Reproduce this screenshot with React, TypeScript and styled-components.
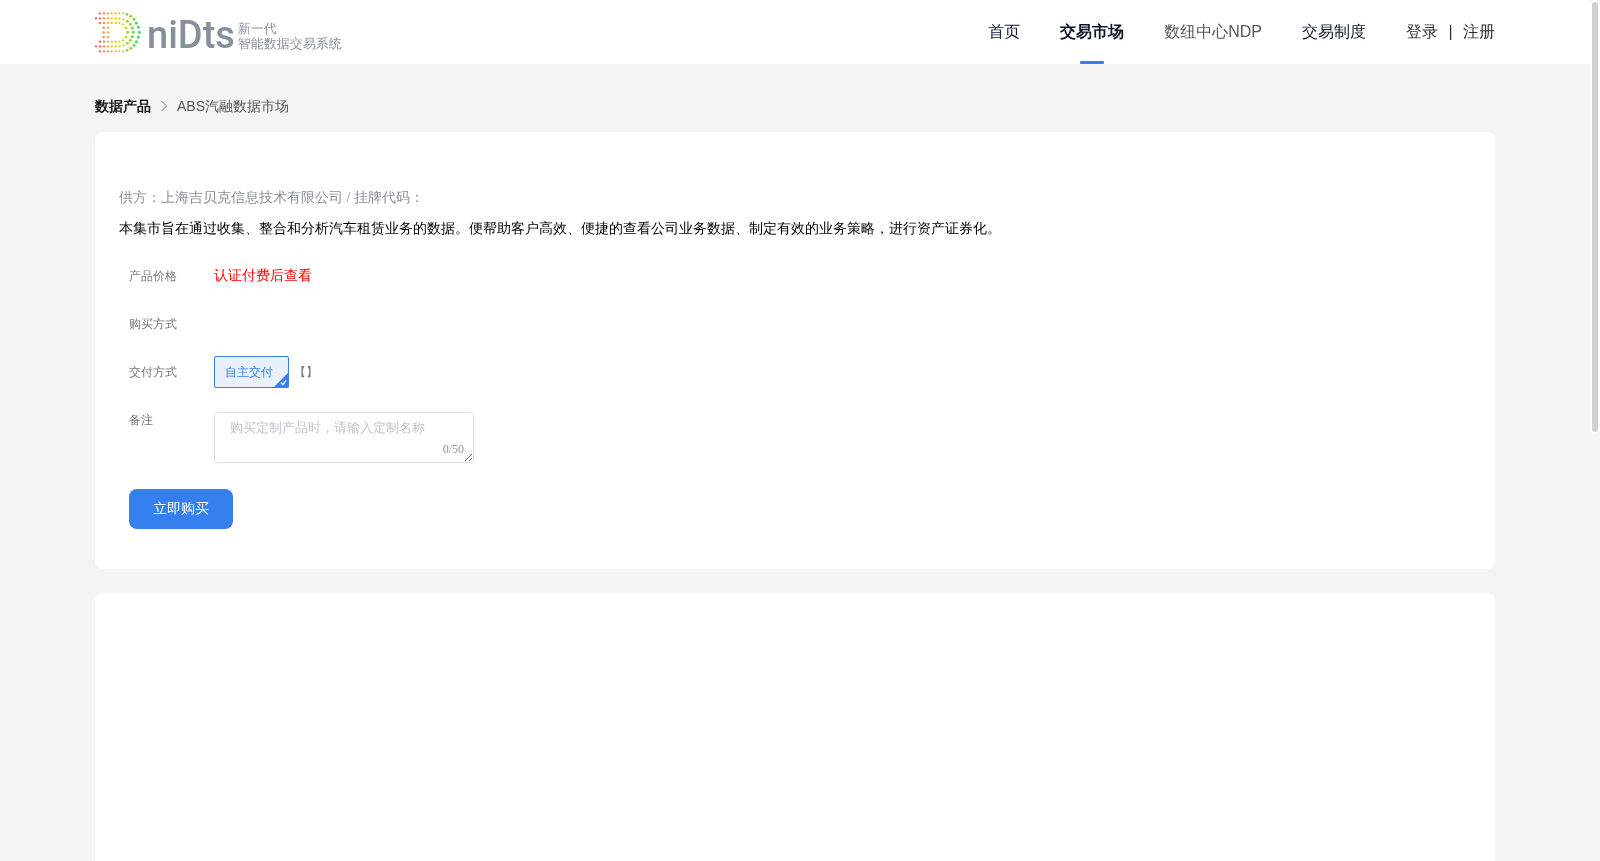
import React, { useState } from "react";
import styled, { createGlobalStyle } from "styled-components";

const sans = `"Liberation Sans", "WenQuanYi Zen Hei", "Noto Sans CJK SC", sans-serif`;
const boldSans = `"Liberation Sans", sans-serif`;
const serif = `"Liberation Serif", "WenQuanYi Zen Hei", "Noto Sans CJK SC", serif`;

const GlobalStyle = createGlobalStyle`
  * { box-sizing: border-box; }
  body { margin: 0; background: #f4f4f4; font-family: ${serif}; }
  p { margin: 0; }
`;

const Page = styled.div`
  display: flex;
  height: 100vh;
  background: #f4f4f4;
`;

const Scroller = styled.div`
  flex: 1;
  min-width: 0;
  overflow-y: auto;
  scrollbar-width: none;
  will-change: transform;
`;

const ScrollTrack = styled.div`
  flex: none;
  width: 10px;
  background: #f4f4f4;
`;

const ScrollThumb = styled.div`
  height: 50.4%;
  border: 2px solid #fff;
  border-radius: 5px;
  background: #d1d1d1;
`;

const Container = styled.div`
  width: 90%;
  max-width: 1400px;
  margin: 0 auto;
`;

const Header = styled.header`
  background: #fff;
  font-family: ${sans};
`;

const HeaderInner = styled(Container)`
  display: flex;
  align-items: center;
  justify-content: space-between;
  height: 64px;
`;

const Logo = styled.a`
  display: flex;
  align-items: center;
  color: #86909c;
  text-decoration: none;
`;

const Wordmark = styled.span`
  padding-top: 6px;
  margin: 0 3px 0 6px;
  font-family: Roboto, sans-serif;
  font-size: 38px;
  line-height: 58px;
  font-weight: 500;
`;

const Tagline = styled.span`
  padding-top: 8px;
  font-size: 13px;
  line-height: 15px;
  white-space: nowrap;
`;

const Nav = styled.nav`
  display: flex;
  gap: 40px;
  font-size: 16px;
`;

const NavLink = styled.a<{ $active?: boolean; $muted?: boolean }>`
  position: relative;
  line-height: 64px;
  color: ${(p) => (p.$muted ? "#555" : "#0b1528")};
  font-family: ${(p) => (p.$active ? boldSans : sans)};
  font-weight: ${(p) => (p.$active ? 700 : 400)};
  text-decoration: none;
  white-space: nowrap;
  &::after {
    content: "";
    display: ${(p) => (p.$active ? "block" : "none")};
    position: absolute;
    bottom: 0;
    left: 50%;
    width: 24px;
    height: 3px;
    border-radius: 1px;
    background: #367fee;
    transform: translateX(-50%);
  }
`;

const Account = styled.div`
  display: flex;
  gap: 10px;
  color: #303133;
  line-height: 64px;
`;

const AccountLink = styled.a`
  color: #303133;
  text-decoration: none;
`;

const Divider = styled.span`
  width: 5px;
  text-align: center;
`;

const Breadcrumb = styled.nav`
  display: flex;
  align-items: center;
  gap: 8px;
  padding: 32px 0 16px;
  font-family: ${sans};
  font-size: 14px;
  line-height: 20px;
  color: #555;
`;

const CrumbLink = styled.a`
  color: #1a1a1a;
  font-family: ${boldSans};
  font-weight: 700;
  text-decoration: none;
`;

const Card = styled.section`
  margin-bottom: 24px;
  padding: 56px 24px 40px;
  border-radius: 8px;
  background: #fff;
`;

const DetailCard = styled(Card)`
  min-height: 1092px;
`;

const Supplier = styled.p`
  color: #86909c;
  font-size: 14px;
  line-height: 20px;
`;

const Description = styled.p`
  margin-top: 8px;
  font-size: 14px;
  line-height: 26px;
  color: #000;
`;

const Form = styled.form`
  margin-top: 18px;
  padding: 0 10px;
`;

const Row = styled.div`
  display: flex;
  align-items: flex-start;
  min-height: 32px;
  margin-bottom: 16px;
`;

const Label = styled.label`
  width: 85px;
  flex: none;
  font-size: 12px;
  line-height: 32px;
  color: #777;
`;

const Value = styled.div`
  display: flex;
  gap: 5px;
  font-size: 12px;
  line-height: 32px;
  color: #777;
`;

const Price = styled.span`
  font-size: 14px;
  color: #f00;
`;

const Option = styled.button`
  position: relative;
  width: 75px;
  height: 32px;
  padding: 0 5px 0 0;
  border: 1px solid #367fee;
  border-radius: 2px;
  background: #eaf1fe;
  color: #367fee;
  font-family: ${serif};
  font-size: 12px;
  line-height: 30px;
`;

const Check = styled.svg`
  position: absolute;
  right: -1px;
  bottom: -1px;
`;

const NoteBox = styled.div`
  position: relative;
  width: 260px;
  margin-top: 8px;
`;

const Note = styled.textarea`
  display: block;
  width: 100%;
  height: 51px;
  padding: 5px 15px;
  border: 1px solid #dcdfe6;
  border-radius: 4px;
  background: #fff;
  font-family: ${serif};
  font-size: 13px;
  line-height: 20px;
  resize: vertical;
  overflow: auto;
  &::placeholder { color: #c0c4cc; }
`;

const Count = styled.span`
  position: absolute;
  right: 10px;
  bottom: 7px;
  font-size: 12px;
  line-height: 14px;
  color: #909399;
`;

const Buy = styled.button`
  display: block;
  margin-top: 26px;
  padding: 0 24px;
  height: 40px;
  border: 0;
  border-radius: 8px;
  background: #367fee;
  color: #fff;
  font-family: ${serif};
  font-size: 14px;
`;

type Dot = [number, number];
const halfDots: Dot[] = [
  [60, 39], [72, 39], [84, 39], [95, 39], [107, 39], [118, 39], [130, 39], [141, 42], [152, 48], [162, 57], [169, 68], [175, 81],
  [48, 54], [60, 54], [72, 54], [84, 54], [95, 54], [107, 54], [118, 54], [130, 57], [142, 63], [151, 72], [157, 83],
  [60, 68], [72, 68], [84, 68], [95, 68], [107, 68], [118, 68], [129, 72], [138, 82],
  [71, 82], [84, 82],
];
const dots: Dot[] = [
  ...halfDots,
  ...halfDots.map(([x, y]): Dot => [x, 192 - y]),
  [71, 96], [84, 96], [143, 96], [160, 96], [178, 96],
];
const dotColor = (x: number) => {
  if (x < 55) return "#ff4f86";
  if (x < 66) return "#ff6060";
  if (x < 78) return "#ff7f48";
  if (x < 90) return "#f9aa30";
  if (x < 112) return "#ecc422";
  if (x < 125) return "#e4d620";
  if (x < 140) return "#c8dc1c";
  if (x < 156) return "#98d92e";
  if (x < 165) return "#74da3e";
  return "#38dc66";
};

export default function App() {
  const [note, setNote] = useState("");
  return (
    <Page>
      <GlobalStyle />
      <Scroller>
        <Header>
          <HeaderInner>
            <Logo href="#">
              <svg width="46" height="41" viewBox="45 35 138 123" aria-hidden="true">
                {dots.map(([x, y]) => (
                  <circle key={`${x}-${y}`} cx={x} cy={y} r={x > 135 ? 4.5 : 3.5} fill={dotColor(x)} />
                ))}
              </svg>
              <Wordmark>niDts</Wordmark>
              <Tagline>
                新一代
                <br />
                智能数据交易系统
              </Tagline>
            </Logo>
            <Nav>
              <NavLink href="#">首页</NavLink>
              <NavLink href="#" $active>交易市场</NavLink>
              <NavLink href="#" $muted>数纽中心NDP</NavLink>
              <NavLink href="#">交易制度</NavLink>
              <Account>
                <AccountLink href="#">登录</AccountLink>
                <Divider>|</Divider>
                <AccountLink href="#">注册</AccountLink>
              </Account>
            </Nav>
          </HeaderInner>
        </Header>
        <Container as="main">
          <Breadcrumb>
            <CrumbLink href="#">数据产品</CrumbLink>
            <svg width="10" height="12" viewBox="0 0 10 12" fill="none" stroke="#777" aria-hidden="true">
              <path d="M2.5 1l5 5-5 5" />
            </svg>
            <span>ABS汽融数据市场</span>
          </Breadcrumb>
          <Card>
            <Supplier>供方：上海吉贝克信息技术有限公司 / 挂牌代码：</Supplier>
            <Description>
              本集市旨在通过收集、整合和分析汽车租赁业务的数据。便帮助客户高效、便捷的查看公司业务数据、制定有效的业务策略，进行资产证券化。
            </Description>
            <Form onSubmit={(e) => e.preventDefault()}>
              <Row>
                <Label as="span">产品价格</Label>
                <Value><Price>认证付费后查看</Price></Value>
              </Row>
              <Row>
                <Label as="span">购买方式</Label>
              </Row>
              <Row>
                <Label as="span">交付方式</Label>
                <Value>
                  <Option type="button" aria-pressed="true">
                    自主交付
                    <Check width="16" height="16" viewBox="0 0 16 16" aria-hidden="true">
                      <path d="M16 0v14a2 2 0 0 1-2 2H0z" fill="#367fee" />
                      <path d="M8 10.5l2 2 3-4" fill="none" stroke="#fff" strokeWidth="1.3" />
                    </Check>
                  </Option>
                  <span>【】</span>
                </Value>
              </Row>
              <Row>
                <Label htmlFor="note">备注</Label>
                <NoteBox>
                  <Note
                    id="note"
                    maxLength={50}
                    placeholder="购买定制产品时，请输入定制名称"
                    value={note}
                    onChange={(e) => setNote(e.target.value)}
                  />
                  <Count>{note.length}/50</Count>
                </NoteBox>
              </Row>
              <Buy type="submit">立即购买</Buy>
            </Form>
          </Card>
          <DetailCard />
        </Container>
      </Scroller>
      <ScrollTrack aria-hidden="true">
        <ScrollThumb />
      </ScrollTrack>
    </Page>
  );
}
